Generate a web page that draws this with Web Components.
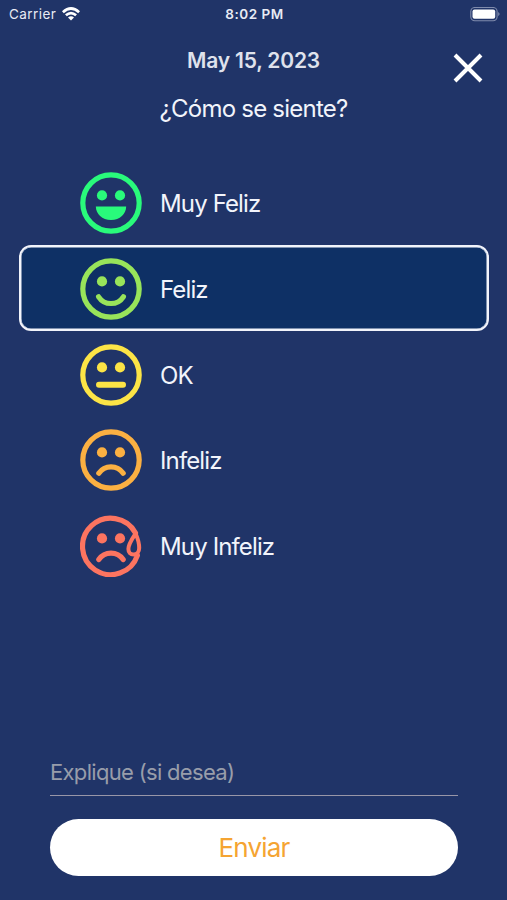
<!DOCTYPE html>
<html lang="es">
<head>
<meta charset="utf-8">
<title>Estado de ánimo</title>
<style>
html,body{margin:0;height:100%;background:#203468}
body{font-family:Inter,"Liberation Sans",sans-serif;color:#f2f4fb}
</style>
</head>
<body>
<mood-screen></mood-screen>
<script>
const define = (name, html, setup) => customElements.define(name, class extends HTMLElement {
  constructor() {
    super();
    this.attachShadow({mode: 'open'}).innerHTML = html;
  }
  connectedCallback() { if (setup) setup(this, this.shadowRoot); }
});

define('status-bar', `
<style>
:host{display:grid;grid-template-columns:1fr auto 1fr;align-items:center;height:28px;padding:0 7px 0 9px;box-sizing:border-box;font-size:13.5px;color:#e8ebf4}
.left{display:flex;align-items:center;gap:6px}
.carrier{letter-spacing:.45px}
.time{font-weight:600;font-size:13.5px;letter-spacing:.5px;margin-bottom:1px}
.battery{justify-self:end}
svg{display:block}
.left svg{margin-bottom:1px}
</style>
<div class="left"><span class="carrier">Carrier</span>
<svg width="18" height="14" viewBox="0 0 18 14" fill="none" stroke="#fff" stroke-width="2.7"><path d="M.9 5.2Q9-2.2 17.1 5.2M3.9 8.3Q9 3.8 14.1 8.3"/><path d="M9 13.5 6 10.4Q9 7.9 12 10.4Z" fill="#fff" stroke="none"/></svg></div>
<span class="time">8:02 PM</span>
<svg class="battery" width="30" height="15" viewBox="0 0 30 15"><rect x=".8" y=".5" width="26.3" height="13.2" rx="4" fill="none" stroke="#7f8bac" stroke-width="1.1"/><rect x="2.5" y="2.4" width="22.7" height="9.4" rx="2" fill="#fff"/><path d="M28.2 4.9Q31 7.1 28.2 9.3Z" fill="#7f8bac"/></svg>`);

define('close-button', `
<style>:host{display:block;width:30px;height:30px}svg{display:block}</style>
<svg width="30" height="30" viewBox="0 0 30 30" stroke="#fff" stroke-width="4"><path d="M2 2 28 28M28 2 2 28"/></svg>`);

const faces = {
  great: '<path d="M15.8 34.4H46.2C46 42 40 47.9 31 47.9S16 42 15.8 34.4Z" fill="currentColor" stroke="none"/>',
  good: '<path d="M18.6 38.8A14.8 14.8 0 0 0 43.4 38.8"/>',
  ok: '<path d="M19 40.8H43" stroke-width="6"/>',
  bad: '<path d="M18.8 44.2A14.8 14.8 0 0 1 43.2 44.2"/>',
  awful: '<path d="M18.8 44.5A14.8 14.8 0 0 1 43.2 44.5"/>'
};
define('mood-face', `<style>:host{display:block;width:62px;height:62px}svg{display:block}</style><div></div>`, (host, root) => {
  const kind = host.getAttribute('kind');
  const ring = kind === 'awful'
    ? '<path d="M55.5 18A28.2 28.2 0 1 0 57.4 40.5"/><path d="M55.6 18.5C52 24 48.4 29 48.4 34C48.4 37.6 50.6 39.6 53.4 39.6C56.8 39.6 59.2 37 59.2 33C59.2 28 57.6 23 55.6 18.5Z" stroke-width="4" stroke-linejoin="round"/>'
    : '<circle cx="31" cy="31" r="28.2"/>';
  root.querySelector('div').innerHTML = `<svg width="62" height="62" viewBox="0 0 62 62" fill="none" stroke="currentColor" stroke-width="5.2" stroke-linecap="round">${ring}<g fill="currentColor" stroke="none"><circle cx="22" cy="23.4" r="5.1"/><circle cx="40" cy="23.4" r="5.1"/></g>${faces[kind]}</svg>`;
});

define('mood-option', `
<style>
:host{display:flex;align-items:center;gap:18px;height:85.9px;box-sizing:border-box;border:2px solid transparent;border-radius:12px;padding:.6px 0 0 59px;font-size:24px;letter-spacing:-.87px}
:host([selected]){background:#0e3065;border-color:#f2f4fb;box-shadow:inset 0 0 0 .5px #f2f4fb}
span{padding-top:1px}
</style>
<slot name="icon"></slot><span><slot></slot></span>`);

define('note-field', `
<style>
:host{display:block;height:48px;box-sizing:border-box;border-bottom:1px solid #9896a8;color:#989daa;font-size:22px;line-height:49px;letter-spacing:-.69px}
</style><slot></slot>`);

define('send-button', `
<style>
:host{display:flex;align-items:center;justify-content:center;height:57.5px;border-radius:29px;background:#fff;color:#f5a432;font-size:26px;letter-spacing:-.8px}
</style><slot></slot>`);

define('mood-screen', `
<style>
:host{display:flex;flex-direction:column;width:507px;height:900px;box-sizing:border-box;background:#203468;overflow:hidden}
header{display:grid;grid-template-columns:1fr auto 1fr;height:131.5px;align-items:start}
.titles{grid-column:2;display:flex;flex-direction:column;align-items:center}
.date{font-size:21px;font-weight:600;line-height:28px;margin-top:19px;color:#dfe2ec;letter-spacing:-.18px}
.question{font-size:24px;line-height:32px;margin-top:18px;letter-spacing:-.77px}
close-button{justify-self:end;margin:25px 24px 0 0}
.list{display:flex;flex-direction:column;padding:0 18px 0 19px}
.form{margin:auto 49px 24px 50px;display:flex;flex-direction:column;gap:22.5px}
</style>
<status-bar></status-bar>
<header><div class="titles"><div class="date">May 15, 2023</div><div class="question">¿Cómo se siente?</div></div><close-button></close-button></header>
<div class="list">
<mood-option><mood-face slot="icon" kind="great" style="color:#29fa7b"></mood-face>Muy Feliz</mood-option>
<mood-option selected><mood-face slot="icon" kind="good" style="color:#98e45a"></mood-face>Feliz</mood-option>
<mood-option><mood-face slot="icon" kind="ok" style="color:#fce446"></mood-face>OK</mood-option>
<mood-option><mood-face slot="icon" kind="bad" style="color:#fbb042"></mood-face>Infeliz</mood-option>
<mood-option><mood-face slot="icon" kind="awful" style="color:#fc7460"></mood-face>Muy Infeliz</mood-option>
</div>
<div class="form"><note-field>Explique (si desea)</note-field><send-button>Enviar</send-button></div>`);
</script>
</body>
</html>
